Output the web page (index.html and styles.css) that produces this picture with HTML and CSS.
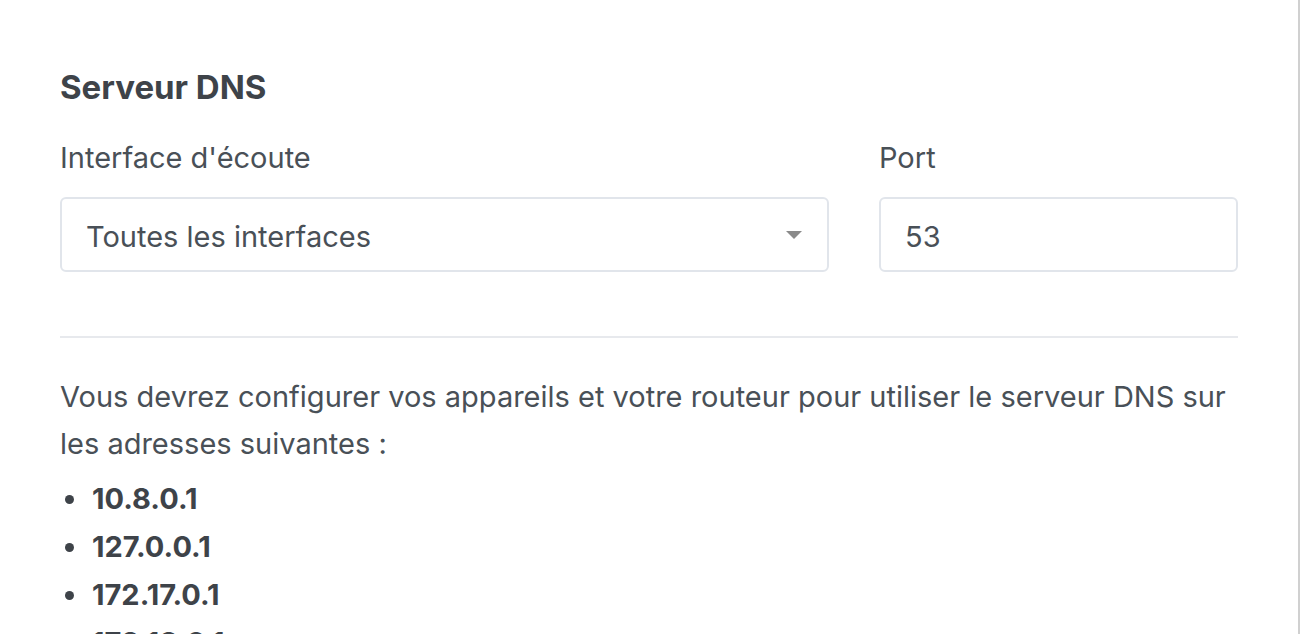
FILE: index.html
```html
<!DOCTYPE html>
<html lang="fr">
<head>
<meta charset="utf-8">
<title>Serveur DNS</title>
<link rel="stylesheet" href="styles.css">
</head>
<body>
<div class="page">
  <section class="setup">
    <h2 class="setup-title">Serveur DNS</h2>
    <div class="fields">
      <div class="field">
        <label class="field-label">Interface d'écoute</label>
        <div class="select">
          <span>Toutes les interfaces</span>
          <svg class="caret" width="16" height="8" viewBox="0 0 16 8"><path d="M0 0H16L8 8Z" fill="#8a8a8a"/></svg>
        </div>
      </div>
      <div class="field">
        <label class="field-label">Port</label>
        <div class="input">53</div>
      </div>
    </div>
    <hr class="divider">
    <p class="note">Vous devrez configurer vos appareils et votre routeur pour utiliser le serveur DNS sur les adresses suivantes :</p>
    <ul class="addresses">
      <li>10.8.0.1</li>
      <li>127.0.0.1</li>
      <li>172.17.0.1</li>
      <li>172.18.0.1</li>
    </ul>
  </section>
</div>
</body>
</html>
```

FILE: styles.css
```css
html, body {
  margin: 0;
  padding: 0;
  height: 100%;
  overflow: hidden;
}
body {
  background: #ffffff;
  font-family: "Inter", "Liberation Sans", sans-serif;
  color: #495057;
}
.page {
  height: 634px;
  border-right: 2px solid #d0d0d0;
  box-sizing: border-box;
  width: 1300px;
  overflow: hidden;
}
.setup {
  padding: 67px 60px 0 60px;
  width: 1178px;
}
.setup-title {
  margin: 0;
  font-size: 33px;
  font-weight: 700;
  color: #3e4349;
  line-height: 40px;
}
.fields {
  display: grid;
  grid-template-columns: 769px 1fr;
  column-gap: 50px;
  margin-top: 31px;
}
.field-label {
  display: block;
  font-size: 29px;
  line-height: 40px;
  margin-bottom: 19px;
  color: #495057;
}
.select, .input {
  box-sizing: border-box;
  height: 75px;
  border: 2px solid #e1e5eb;
  border-radius: 6px;
  display: flex;
  align-items: center;
  font-size: 29px;
  color: #495057;
  padding-top: 3px;
}
.select {
  padding-left: 24px;
  padding-right: 25px;
  justify-content: space-between;
}
.input {
  padding-left: 24px;
  padding-right: 24px;
}
.caret {
  display: block;
  margin-top: -3px;
}
.divider {
  border: 0;
  border-top: 2px solid #e7e9ed;
  margin: 64px 0 0 0;
}
.note {
  margin: 35px 0 0 0;
  font-size: 29px;
  line-height: 47px;
}
.addresses {
  list-style: none;
  margin: 8px 0 0 0;
  padding: 0 0 0 5px;
  font-size: 29px;
  line-height: 48px;
  font-weight: 700;
  color: #3e4349;
}
.addresses li::before {
  content: "";
  display: inline-block;
  width: 9px;
  height: 9px;
  border-radius: 50%;
  background: #3e4349;
  margin-right: 18px;
  vertical-align: middle;
  position: relative;
  top: -2px;
}
```
